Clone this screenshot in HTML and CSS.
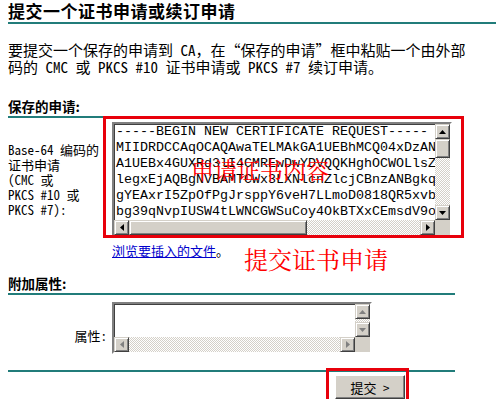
FILE: index.html
```html
<!DOCTYPE html>
<html>
<head>
    <title>提交一个证书申请或续订申请</title>
    <link rel="stylesheet" href="styles.css">
</head>
<body>
    <h1 class="title">提交一个证书申请或续订申请</h1>
    <p class="intro">要提交一个保存的申请到 CA，在“保存的申请”框中粘贴一个由外部<br>码的 CMC 或 PKCS #10 证书申请或 PKCS #7 续订申请。</p>

    <div class="section saved">
        <h2 class="section-head">保存的申请:</h2>
        <div class="field">
            <div class="label">Base-64 编码的<br>证书申请<br>(CMC 或<br>PKCS #10 或<br>PKCS #7):</div>
            <div class="textbox big">
<div class="text">-----BEGIN NEW CERTIFICATE REQUEST-----
MIIDRDCCAqOCAQAwaTELMAkGA1UEBhMCQ04xDzAN
A1UEBx4GUXRd3lI4CMREwDwYDVQQKHghOCWOLlsZW
legxEjAQBgNVBAMTCWx3LXNlcnZlcjCBnzANBgkq
gYEAxrI5ZpOfPgJrsppY6veH7LLmoD0818QR5xvb
bg39qNvpIUSW4tLWNCGWSuCoy4OkBTXxCEmsdV9o</div>
                <div class="vbar">
                    <span class="sb-btn"><svg width="7" height="4" viewBox="0 0 7 4"><path d="M3.5 0L7 4H0z"/></svg></span>
                    <span class="sb-thumb v"></span>
                    <span class="sb-track"></span>
                    <span class="sb-btn"><svg width="7" height="4" viewBox="0 0 7 4"><path d="M0 0H7L3.5 4z"/></svg></span>
                </div>
                <div class="hbar">
                    <span class="sb-btn"><svg width="4" height="7" viewBox="0 0 4 7"><path d="M4 0V7L0 3.5z"/></svg></span>
                    <span class="sb-thumb h"></span>
                    <span class="sb-track"></span>
                    <span class="sb-btn"><svg width="4" height="7" viewBox="0 0 4 7"><path d="M0 0L4 3.5L0 7z"/></svg></span>
                </div>
                <div class="corner"></div>
            </div>
        </div>
        <div class="browse-line"><a href="#" class="browse">浏览要插入的文件</a>。</div>

        <!-- red annotations drawn over the form -->
        <div class="mark-box"></div>
        <div class="mark-text content-note">申请证书内容</div>
        <div class="mark-text submit-note">提交证书申请</div>
    </div>

    <div class="section extra">
        <h2 class="section-head">附加属性:</h2>
        <div class="field">
            <div class="label attr">属性:</div>
            <div class="textbox small">
                <div class="text"></div>
                <div class="vbar">
                    <span class="sb-btn off"><svg width="7" height="4" viewBox="0 0 7 4"><path d="M3.5 0L7 4H0z"/></svg></span>
                    <span class="sb-track"></span>
                    <span class="sb-btn off"><svg width="7" height="4" viewBox="0 0 7 4"><path d="M0 0H7L3.5 4z"/></svg></span>
                </div>
                <div class="hbar">
                    <span class="sb-btn off"><svg width="4" height="7" viewBox="0 0 4 7"><path d="M4 0V7L0 3.5z"/></svg></span>
                    <span class="sb-track"></span>
                    <span class="sb-btn off"><svg width="4" height="7" viewBox="0 0 4 7"><path d="M0 0L4 3.5L0 7z"/></svg></span>
                </div>
                <div class="corner"></div>
            </div>
        </div>
    </div>

    <hr class="rule">
    <div class="submit">
        <button class="submit-btn">提交 &gt;</button>
    </div>
</body>
</html>
```

FILE: styles.css
```css
body {
    font-family: "Noto Sans Mono CJK SC", "Liberation Mono", "Noto Sans CJK SC", monospace;
    margin: 0 0 0 8px;
    color: #000;
    background: #fff;
}
.title {
    margin: 0;
    font-family: "Noto Sans CJK SC", sans-serif;
    font-size: 17px;
    letter-spacing: 0.5px;
    line-height: 22px;
    font-weight: bold;
    border-bottom: 2px solid #217c7a;
}
.intro {
    margin: 17px 0 0 0;
    font-size: 15px;
    line-height: 17px;
    white-space: nowrap;
}
.section {
    position: relative;
    width: 447px;
}
.saved {
    margin-top: 22px;
}
.extra {
    margin-top: 15px;
}
.section-head {
    margin: 0;
    font-family: "Noto Sans CJK SC", sans-serif;
    font-size: 13.5px;
    line-height: 19px;
    font-weight: bold;
    border-bottom: 2px solid #217c7a;
}
.field {
    display: flex;
    align-items: center;
    margin-top: 4px;
}
.extra .field {
    margin-top: 7px;
}
.label {
    width: 104px;
    flex-shrink: 0;
    font-size: 13px;
    line-height: 15px;
}
.label.attr {
    text-align: right;
    padding-right: 5px;
    box-sizing: border-box;
    margin-top: 15px;
}

/* old style textarea with classic scrollbars */
.textbox {
    box-sizing: border-box;
    display: grid;
    grid-template-columns: 1fr 15px;
    border: 2px solid;
    border-color: #808080 #fff #fff #808080;
    box-shadow: inset 1px 1px #404040, inset -1px -1px #d4d0c8;
    background: #fff;
}
.textbox.big {
    width: 340px;
    height: 115px;
    grid-template-rows: 96px 15px;
}
.textbox.small {
    width: 260px;
    height: 52px;
    grid-template-rows: 33px 15px;
}
.text {
    font-family: "Liberation Mono", monospace;
    font-size: 13.33px;
    line-height: 16px;
    white-space: pre;
    overflow: hidden;
    padding: 0 0 0 2px;
}
.vbar {
    display: flex;
    flex-direction: column;
}
.hbar {
    display: flex;
}
.sb-btn, .sb-thumb {
    box-sizing: border-box;
    width: 15px;
    height: 15px;
    flex-shrink: 0;
    background: #d4d0c8;
    border: 1px solid;
    border-color: #d4d0c8 #404040 #404040 #d4d0c8;
    box-shadow: inset 1px 1px #fff, inset -1px -1px #808080;
    display: flex;
    align-items: center;
    justify-content: center;
}
.sb-btn svg {
    fill: #000;
    display: block;
}
.sb-btn.off svg {
    fill: #808080;
}
.sb-thumb.v {
    height: 19px;
}
.sb-thumb.h {
    width: 178px;
}
.sb-track {
    flex: 1;
    background-image: repeating-conic-gradient(#fff 0 25%, #d4d0c8 0 50%);
    background-size: 2px 2px;
}
.corner {
    background: #d4d0c8;
}
.browse-line {
    margin-top: 6px;
    padding-left: 104px;
    font-size: 13px;
    line-height: 16px;
}
.browse {
    color: #0000cc;
}

/* annotations */
.mark-box {
    position: absolute;
    left: 95px;
    top: 19px;
    width: 361px;
    height: 122px;
    box-sizing: border-box;
    border: 3px solid #e8000b;
}
.mark-text {
    position: absolute;
    font-family: "Noto Serif CJK SC", "Noto Sans CJK SC", serif;
    color: #f00;
    white-space: nowrap;
}
.content-note {
    left: 183px;
    top: 60px;
    font-size: 23px;
    line-height: 26px;
}
.submit-note {
    left: 236px;
    top: 148px;
    font-size: 24px;
    line-height: 28px;
}

.rule {
    width: 447px;
    margin: 16px 0 0 0;
    border: 0;
    border-top: 2px solid #217c7a;
}
.submit {
    position: relative;
    display: inline-block;
    margin: 3px 0 0 327px;
}
.submit::after {
    content: '';
    position: absolute;
    left: -9px;
    top: -7px;
    right: -4px;
    bottom: -5px;
    border: 3px solid #e8000b;
}
.submit-btn {
    display: block;
    width: 70px;
    height: 24px;
    padding: 0;
    font-family: "Noto Sans Mono CJK SC", "Liberation Mono", "Noto Sans CJK SC", monospace;
    font-size: 13px;
    background: #d4d0c8;
    border: 1px solid;
    border-color: #fff #404040 #404040 #fff;
    box-shadow: inset -1px -1px #808080;
    color: #000;
}
```
